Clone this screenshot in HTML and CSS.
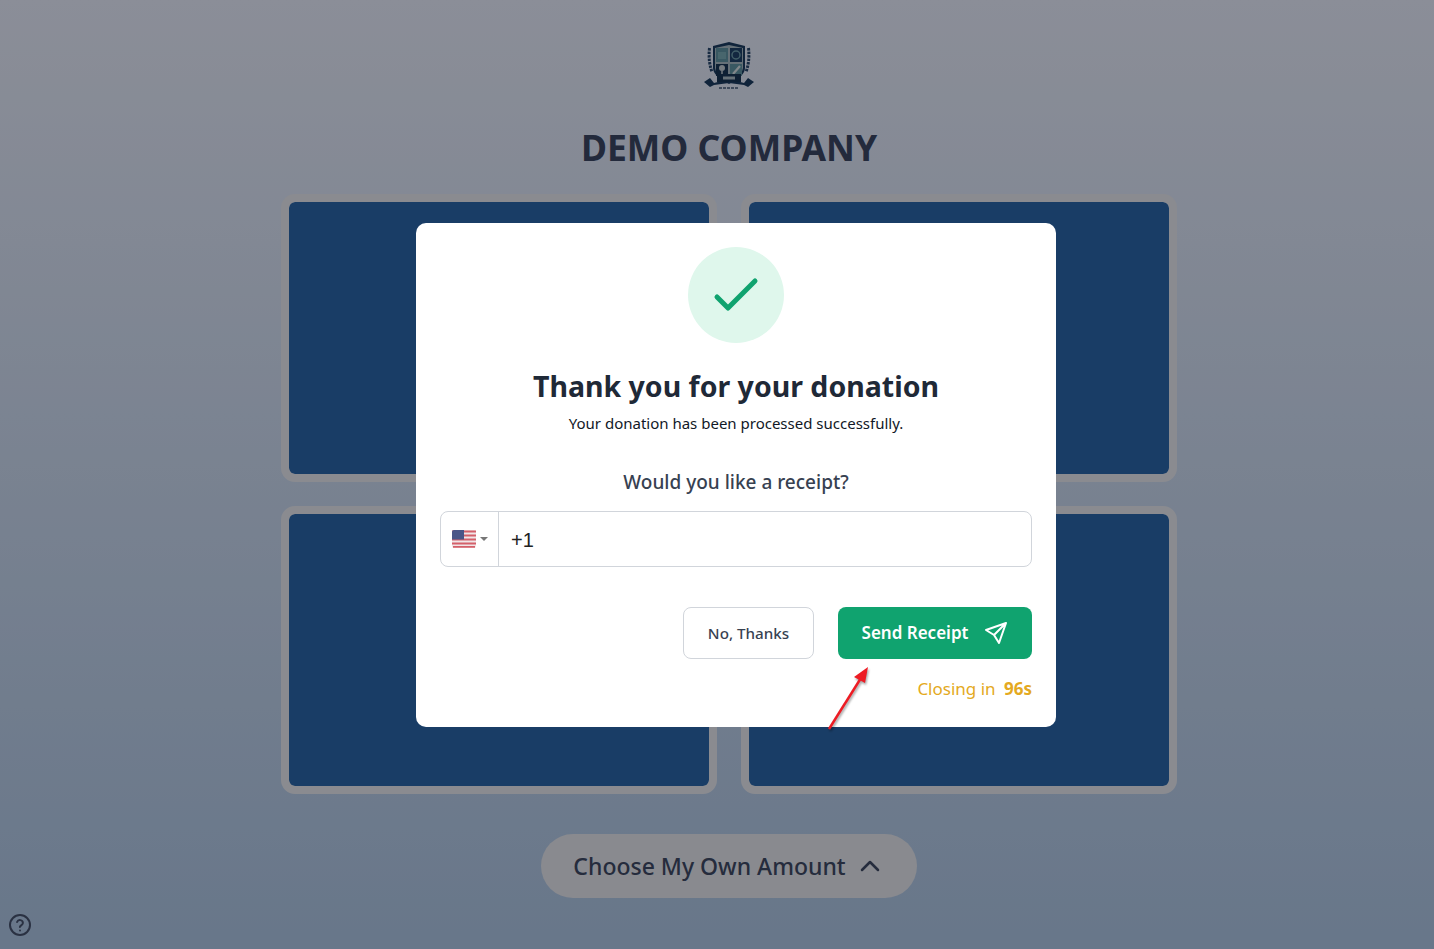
FILE: index.html
```html
<!DOCTYPE html>
<html lang="en">
<head>
  <meta charset="UTF-8">
  <meta name="viewport" content="width=device-width, initial-scale=1.0">
  <title>Demo Company</title>
  <link rel="stylesheet" href="styles.css">
</head>
<body>
  <main class="page">
    <div class="logo-box">
      <svg class="crest" viewBox="0 0 52 50" aria-hidden="true">
        <!-- laurels -->
        <path d="M6.5 7 Q5 20 9 31 M45.500 7 Q47 20 43 31" fill="none" stroke="#2a4a70" stroke-width="3" stroke-dasharray="2.500 1"/>
        <!-- shield -->
        <path d="M10 5 L26 1 L42 5 V27 Q42 35 26 43 Q10 35 10 27 Z" fill="#1c3d63"/>
        <path d="M12 7 L26 4 L40 7 V27 Q40 33 26 40 Q12 33 12 27 Z" fill="#a9bbc7"/>
        <rect x="13" y="7" width="12" height="14" fill="#5f93a4"/>
        <rect x="27" y="7" width="12" height="14" fill="#1f4269"/>
        <rect x="13" y="23" width="12" height="12" fill="#183658"/>
        <rect x="27" y="23" width="12" height="12" fill="#5f93a4"/>
        <rect x="15" y="11" width="8" height="7" fill="#78aab6"/>
        <circle cx="33" cy="14" r="4" fill="none" stroke="#6c9bab" stroke-width="1.500"/>
        <circle cx="19" cy="27" r="3" fill="#c3ced6"/>
        <path d="M19 30 V33" stroke="#c3ced6" stroke-width="1.500"/>
        <path d="M30 33 L37 25" stroke="#d5e0e6" stroke-width="2.200"/>
        <!-- ribbon -->
        <path d="M1 41 L7 37 L11 42 L26 38 L41 42 L45 37 L51 41 L45 46 L41 44 L26 42 L11 44 L7 46 Z" fill="#1c3d63"/>
        <rect x="14" y="33" width="24" height="8" fill="#183658"/>
        <rect x="20" y="35.500" width="12" height="3" fill="#a9bbc7"/>
        <path d="M16 47 H36" stroke="#41597a" stroke-width="1.500" stroke-dasharray="3 1"/>
      </svg>
    </div>
    <h1 class="company">DEMO COMPANY</h1>
    <div class="amount-grid">
      <div class="amount-card"></div>
      <div class="amount-card"></div>
      <div class="amount-card"></div>
      <div class="amount-card"></div>
    </div>
    <button class="own-amount">
      Choose My Own Amount
      <svg class="chevron" viewBox="0 0 24 24" aria-hidden="true"><path d="M4 16 L12 8 L20 16"/></svg>
    </button>
  </main>

  <svg class="help" viewBox="0 0 24 24" aria-hidden="true">
    <circle cx="12" cy="12" r="10"/>
    <path d="M9.100 9a3 3 0 0 1 5.800 1c0 2-3 2.600-3 4"/>
    <path d="M12 17.500h.01"/>
  </svg>

  <!-- Receipt dialog -->
  <div class="overlay">
    <div class="modal">
      <div class="check-circle">
        <svg viewBox="0 0 48 48" aria-hidden="true"><path d="M5 26 L16 37 L43 10"/></svg>
      </div>
      <h2 class="modal-title">Thank you for your donation</h2>
      <p class="modal-sub">Your donation has been processed successfully.</p>
      <p class="modal-ask">Would you like a receipt?</p>
      <div class="phone">
        <div class="phone-flag">
          <svg class="flag" viewBox="0 0 24 18" aria-hidden="true">
            <rect width="24" height="18" rx="2" fill="#f1e6e8"/>
            <path d="M0 1.500h24M0 5.500h24M0 9.500h24M0 13.500h24M1 16.800h22" stroke="#d4606a" stroke-width="1.800"/>
            <path d="M2 0h10v9.500H0V2a2 2 0 0 1 2-2z" fill="#4a5688"/>
          </svg>
          <span class="caret"></span>
        </div>
        <div class="phone-value">+1</div>
      </div>
      <div class="modal-actions">
        <button class="btn btn-plain">No, Thanks</button>
        <button class="btn btn-send">
          Send Receipt
          <svg class="send-icon" viewBox="0 0 24 24" aria-hidden="true"><path d="M22 2 L2 9 L10 14 L15 22 Z M22 2 L10 14"/></svg>
        </button>
      </div>
      <div class="closing">Closing in <b>96s</b></div>
    </div>
    <!-- annotation on the screenshot -->
    <svg class="arrow" viewBox="0 0 50 70" aria-hidden="true">
      <path d="M3 65 L35 14" stroke="#ed1c24" stroke-width="2.500" fill="none"/>
      <path d="M42 3 L39 19 L28 13 Z" fill="#ed1c24"/>
    </svg>
  </div>
</body>
</html>
```

FILE: styles.css
```css
/* Base styling */
* {
  box-sizing: border-box;
}
html, body {
  height: 100%;
}
body {
  margin: 0;
  overflow: hidden;
  font-family: "Noto Sans", "Open Sans", sans-serif;
  background: linear-gradient(180deg, #e8edfd 0%, #adc6e6 100%);
}
button {
  font-family: inherit;
  border: none;
}

/* Page behind the dialog */
.page {
  display: flex;
  flex-direction: column;
  align-items: center;
  height: 100%;
  padding: 28px 0 0 24px;
}
.logo-box {
  width: 80px;
  height: 80px;
  display: flex;
  justify-content: center;
  align-items: flex-start;
  padding-top: 13px;
  border-radius: 12px;
  background: rgba(255,255,255,0.03);
}
.crest {
  width: 52px;
  height: 50px;
}
.company {
  margin: 19px 0 25px;
  height: 42px;
  line-height: 40px;
  font-size: 35.500px;
  font-weight: 700;
  color: #3b4664;
}
.amount-grid {
  display: grid;
  grid-template-columns: 436px 436px;
  grid-auto-rows: 288px;
  gap: 24px;
}
.amount-card {
  background: #2b66aa;
  border: 8px solid #e6e8f0;
  border-radius: 14px;
  background-clip: padding-box;
}
.own-amount {
  display: flex;
  align-items: center;
  gap: 12px;
  height: 64px;
  margin-top: 40px;
  padding: 0 35px 0 32px;
  border-radius: 32px;
  background: #e4e6ee;
  font-size: 23px;
  font-weight: 500;
  color: #3f4a66;
}
.chevron {
  width: 24px;
  height: 24px;
  fill: none;
  stroke: #3f4a66;
  stroke-width: 2.500;
  stroke-linecap: round;
  stroke-linejoin: round;
}
.help {
  position: absolute;
  left: 8px;
  top: 913px;
  width: 24px;
  height: 24px;
  fill: none;
  stroke: #47536f;
  stroke-width: 2;
  stroke-linecap: round;
  z-index: 1;
}

/* Dialog */
.overlay {
  position: fixed;
  inset: 0;
  display: flex;
  justify-content: center;
  align-items: center;
  padding-left: 38px;
  background: rgba(0,0,0,0.4);
  z-index: 2;
}
.modal {
  width: 640px;
  height: 504px;
  padding: 24px;
  background: #fff;
  border-radius: 10px;
  display: flex;
  flex-direction: column;
}
.check-circle {
  width: 96px;
  height: 96px;
  margin: 0 auto;
  border-radius: 50%;
  background: #dff7ec;
  display: flex;
  align-items: center;
  justify-content: center;
}
.check-circle svg {
  width: 48px;
  height: 48px;
  fill: none;
  stroke: #10a36f;
  stroke-width: 5;
  stroke-linecap: round;
  stroke-linejoin: round;
}
.modal-title {
  margin: 23px 0 0;
  text-align: center;
  font-size: 28.500px;
  line-height: 40px;
  font-weight: 700;
  color: #1f2937;
}
.modal-sub {
  margin: 5px 0 0;
  text-align: center;
  font-size: 15px;
  line-height: 24px;
  color: #111827;
}
.modal-ask {
  margin: 34px 0 0;
  text-align: center;
  font-size: 19px;
  line-height: 26px;
  font-weight: 500;
  color: #374151;
}
.phone {
  display: flex;
  height: 56px;
  margin-top: 16px;
  border: 1px solid #d1d5db;
  border-radius: 8px;
}
.phone-flag {
  width: 58px;
  display: flex;
  align-items: center;
  padding-left: 11px;
  gap: 4px;
  border-right: 1px solid #d1d5db;
}
.flag {
  width: 24px;
  height: 18px;
}
.caret {
  width: 0;
  height: 0;
  border-left: 4px solid transparent;
  border-right: 4px solid transparent;
  border-top: 4px solid #777;
}
.phone-value {
  display: flex;
  align-items: center;
  padding: 3px 0 0 12px;
  font-family: "Liberation Sans", sans-serif;
  font-size: 20px;
  color: #222;
}
.modal-actions {
  display: flex;
  justify-content: flex-end;
  gap: 24px;
  margin-top: 40px;
}
.btn {
  height: 52px;
  border-radius: 8px;
  display: flex;
  align-items: center;
  justify-content: center;
}
.btn-plain {
  width: 131px;
  background: #fff;
  border: 1px solid #d1d5db;
  font-size: 15.200px;
  font-weight: 500;
  color: #374151;
}
.btn-send {
  width: 194px;
  gap: 16px;
  background: #10a36f;
  color: #fff;
  font-size: 17px;
  font-weight: 600;
}
.send-icon {
  width: 24px;
  height: 24px;
  fill: none;
  stroke: #fff;
  stroke-width: 2;
  stroke-linejoin: round;
}
.closing {
  margin-top: 17px;
  text-align: right;
  font-size: 17px;
  line-height: 26px;
  color: #e4a921;
}
.closing b {
  margin-left: 4px;
  font-weight: 700;
}
.arrow {
  position: absolute;
  left: 826px;
  top: 664px;
  width: 50px;
  height: 70px;
  filter: drop-shadow(1px 2px 1px rgba(0,0,0,0.35));
}
```
